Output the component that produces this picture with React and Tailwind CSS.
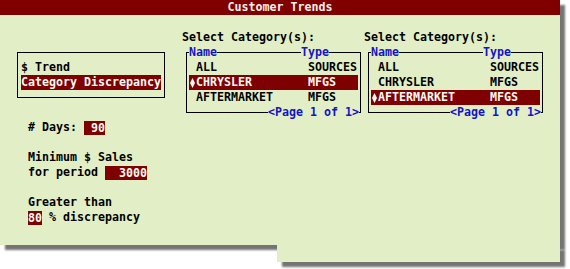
const BG = "bg-[#e2efc6]";

const lists = [
  { sel: 1 },
  { sel: 2 },
];

const rows = [
  { name: "ALL", type: "SOURCES" },
  { name: "CHRYSLER", type: "MFGS" },
  { name: "AFTERMARKET", type: "MFGS" },
];

function Diamond() {
  return (
    <svg width="5" height="10" viewBox="0 0 5 10" className="ml-[1px]">
      <polygon points="2.5,0 5,5 2.5,10 0,5" fill="currentColor" />
    </svg>
  );
}

function CategoryList({ sel }) {
  return (
    <div className="w-[182px]">
      <div className="h-[15px] whitespace-pre">Select Category(s):</div>
      <div className="relative ml-[4px] w-[175px] pt-[7px]">
        <div className="border border-black pt-[7px] pb-[7px]">
          {rows.map((r, i) => (
            <div
              key={r.name}
              className={`mx-[2px] flex h-[15px] items-center whitespace-pre ${
                i === sel ? "bg-[#7f0000] text-[#fbfbf4]" : "text-black"
              }`}
            >
              <span className="flex w-[7px] items-center">{i === sel ? <Diamond /> : null}</span>
              <span className="w-[112px]">{r.name}</span>
              <span>{r.type}</span>
            </div>
          ))}
        </div>
        <span className={`absolute left-[3px] top-0 h-[15px] ${BG} text-[#1414c8]`}>Name</span>
        <span className={`absolute left-[115px] top-0 h-[15px] ${BG} text-[#1414c8]`}>Type</span>
        <span className={`absolute right-[2px] -bottom-[7px] h-[15px] whitespace-pre ${BG} text-[#1414c8]`}>
          {"<Page 1 of 1>"}
        </span>
      </div>
    </div>
  );
}

function Field({ children }) {
  return (
    <span className="inline-block h-[14px] bg-[#7f0000] leading-[14px] text-[#fbfbf4] whitespace-pre">
      {children}
    </span>
  );
}

export default function App() {
  return (
    <div className="h-[269px] w-[570px] overflow-hidden bg-white font-['DejaVu_Sans_Mono',monospace] text-[11.63px] font-bold leading-[15px] text-black">
      <div className="w-[560px]">
        <div className={`${BG} shadow-[5px_5px_2px_#747474]`}>
          <div className="h-[15px] bg-[#800000] text-center text-[#f4f0ea]">Customer Trends</div>
          <div className="flex h-[230px]">
            {/* left column */}
            <div className="w-[182px] pt-[37px]">
              <div className="ml-[17px] w-[148px] border border-black pb-[7px] pl-[3px] pt-[7px]">
                <div className="h-[15px] whitespace-pre">$ Trend</div>
                <div className="h-[15px] w-[140px] whitespace-pre bg-[#7f0000] text-[#fbfbf4]">Category Discrepancy</div>
              </div>
              <div className="ml-[28px] mt-[22px] whitespace-pre">
                <div className="flex h-[15px] items-center">
                  # Days: <Field>{" 90"}</Field>
                </div>
                <div className="h-[15px]" />
                <div className="h-[15px]">Minimum $ Sales</div>
                <div className="flex h-[15px] items-center">
                  for period <Field>{"  3000"}</Field>
                </div>
                <div className="h-[15px]" />
                <div className="h-[15px]">Greater than</div>
                <div className="flex h-[15px] items-center">
                  <Field>80</Field> % discrepancy
                </div>
              </div>
            </div>
            {/* category lists */}
            <div className="flex pt-[15px]">
              {lists.map((l, i) => (
                <CategoryList key={i} sel={l.sel} />
              ))}
            </div>
          </div>
        </div>
        <div className={`ml-[277px] h-[17px] ${BG} shadow-[5px_5px_2px_#747474]`} />
      </div>
    </div>
  );
}
